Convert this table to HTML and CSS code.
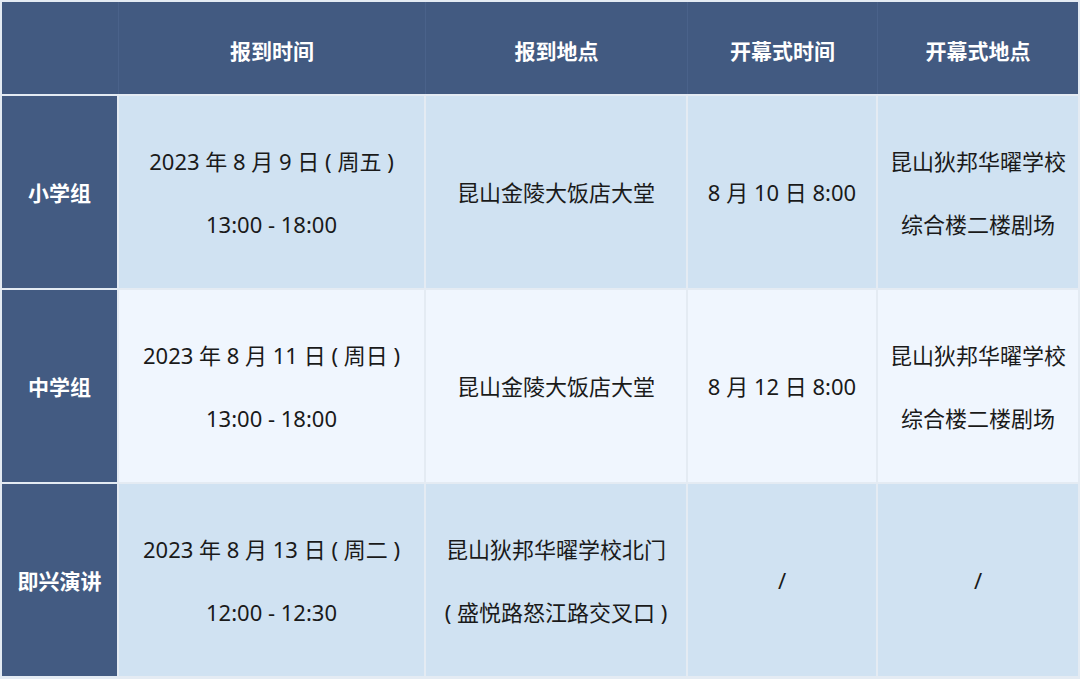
FILE: index.html
```html
<!DOCTYPE html>
<html lang="zh-CN">
<head>
<meta charset="utf-8">
<title>报到安排</title>
<link rel="stylesheet" href="styles.css">
</head>
<body>
<div class="table">
  <div class="row head">
    <div class="cell"></div>
    <div class="cell">报到时间</div>
    <div class="cell">报到地点</div>
    <div class="cell">开幕式时间</div>
    <div class="cell">开幕式地点</div>
  </div>
  <div class="row body alt">
    <div class="cell label">小学组</div>
    <div class="cell"><p>2023 年 8 月 9 日 ( 周五 )</p><p>13:00 - 18:00</p></div>
    <div class="cell"><p>昆山金陵大饭店大堂</p></div>
    <div class="cell"><p>8 月 10 日 8:00</p></div>
    <div class="cell"><p>昆山狄邦华曜学校</p><p>综合楼二楼剧场</p></div>
  </div>
  <div class="row body light">
    <div class="cell label">中学组</div>
    <div class="cell"><p>2023 年 8 月 11 日 ( 周日 )</p><p>13:00 - 18:00</p></div>
    <div class="cell"><p>昆山金陵大饭店大堂</p></div>
    <div class="cell"><p>8 月 12 日 8:00</p></div>
    <div class="cell"><p>昆山狄邦华曜学校</p><p>综合楼二楼剧场</p></div>
  </div>
  <div class="row body alt">
    <div class="cell label">即兴演讲</div>
    <div class="cell"><p>2023 年 8 月 13 日 ( 周二 )</p><p>12:00 - 12:30</p></div>
    <div class="cell"><p>昆山狄邦华曜学校北门</p><p>( 盛悦路怒江路交叉口 )</p></div>
    <div class="cell"><p>/</p></div>
    <div class="cell"><p>/</p></div>
  </div>
</div>
</body>
</html>
```

FILE: styles.css
```css
html, body {
  margin: 0;
  padding: 0;
  background: #ffffff;
}
body {
  font-family: "Noto Sans", "Noto Sans CJK SC", sans-serif;
  color: #1a1a1a;
}
.table {
  width: 1080px;
  height: 679px;
  box-sizing: border-box;
  padding: 2px 2px 3px 2px;
  background: #e4ebf3;
  display: flex;
  flex-direction: column;
  gap: 2px;
}
.row {
  display: grid;
  grid-template-columns: 115px 305px 260px 188px 200px;
  gap: 2px;
}
.head {
  height: 92px;
  background: #4a628a;
  column-gap: 1px;
  grid-template-columns: 116px 306px 261px 189px 200px;
}
.body {
  flex: 1;
}
.cell {
  display: flex;
  flex-direction: column;
  align-items: center;
  justify-content: center;
  gap: 39px;
  text-align: center;
  font-size: 22px;
}
.cell p {
  margin: 0;
  line-height: 24px;
  white-space: nowrap;
}
.head .cell {
  background: #425a81;
  color: #ffffff;
  font-weight: 700;
  font-size: 21px;
  font-family: "Noto Sans CJK SC", sans-serif;
  padding-top: 3px;
}
.alt .cell {
  background: #d0e2f2;
}
.light .cell {
  background: #f0f6fe;
}
.body .cell.label {
  background: #435b82;
  color: #ffffff;
  font-weight: 700;
  font-size: 21px;
  font-family: "Noto Sans CJK SC", sans-serif;
}
```
